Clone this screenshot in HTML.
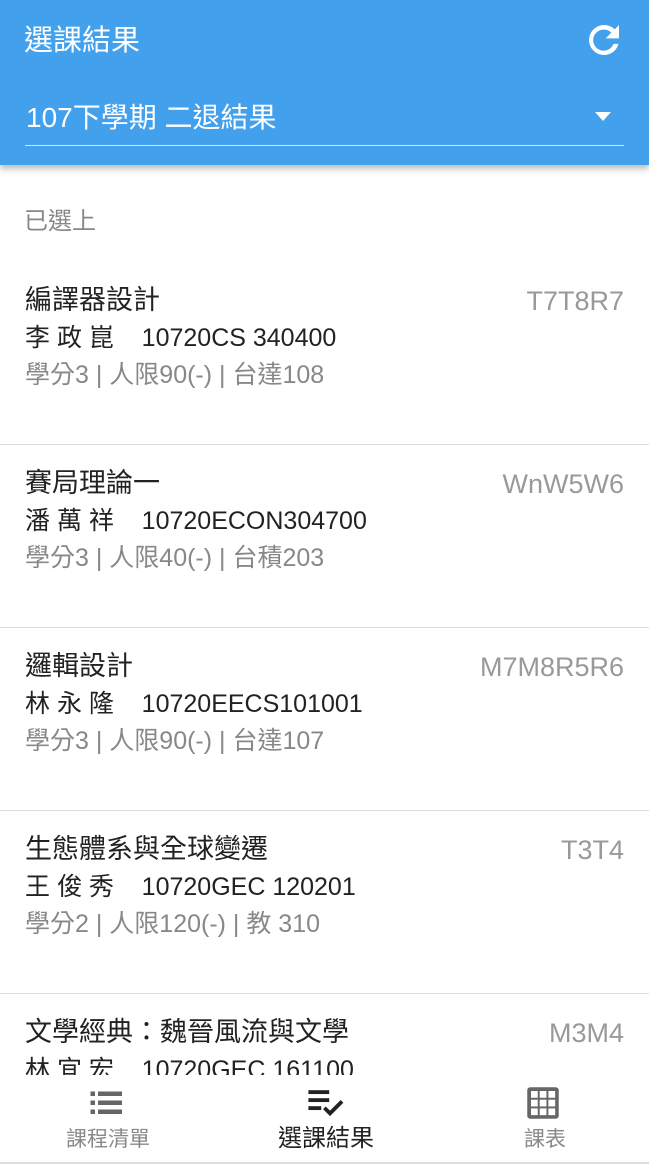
<!DOCTYPE html>
<html><head><meta charset="utf-8"><style>
*{margin:0;padding:0;box-sizing:border-box}
html,body{width:649px;height:1164px;overflow:hidden}
body{background:#fff;font-family:"Liberation Sans","Noto Sans CJK TC",sans-serif;position:relative;line-height:1}
.hdr{position:absolute;left:0;top:0;width:649px;height:165px;background:#42a0ec;box-shadow:0 4px 6px rgba(0,0,0,.25);z-index:2}
.ttl{position:absolute;left:24px;top:27px;font-size:29px;color:#fff}
.sel{position:absolute;left:26px;top:104px;font-size:28px;color:#fff}
.line{position:absolute;left:25px;right:25px;top:145px;height:1px;background:#cfe6fb}
.tri{position:absolute;left:595px;top:112px;width:0;height:0;border-left:8px solid transparent;border-right:8px solid transparent;border-top:9px solid #fff}
.sec{position:absolute;left:24px;top:210px;font-size:24px;color:#888}
.item{position:absolute;left:0;width:649px;height:183px;border-bottom:1px solid #ddd}
.item .a{position:absolute;left:25px;top:25px;font-size:27px;color:#222}
.item .t{position:absolute;right:25px;top:26px;font-size:27px;color:#999}
.item .b{position:absolute;left:25px;top:64px;font-size:25px;color:#222;white-space:pre}
.item .c{position:absolute;left:25px;top:101px;font-size:25px;color:#888}
.nav{position:absolute;left:0;top:1075px;width:649px;height:89px;background:#fff;border-bottom:2px solid #ddd;z-index:3}
.nv{position:absolute;top:0;width:216px;text-align:center}
.nv span{position:absolute;top:54px;left:0;width:216px;font-size:21px;color:#888}
.nv svg{position:absolute;top:12px}
</style></head><body>
<div class="hdr">
<div class="ttl">選課結果</div>
<svg style="position:absolute;left:584px;top:20px" width="40" height="40" viewBox="0 0 24 24"><path fill="#fff" d="M18.4 5.6A9 9 0 0 0 12 3a9 9 0 1 0 8.7 11.3h-3A6.3 6.3 0 1 1 12 5.8c1.8 0 3.3.7 4.4 1.8L13 11h8V3z"/></svg>
<div class="sel">107下學期 二退結果</div>
<div class="tri"></div>
<div class="line"></div>
</div>
<div class="sec">已選上</div>
<div class="item" style="top:262px"><div class="a">編譯器設計</div><div class="t">T7T8R7</div><div class="b">李 政 崑    10720CS 340400</div><div class="c">學分3 | 人限90(-) | 台達108</div></div>
<div class="item" style="top:445px"><div class="a">賽局理論一</div><div class="t">WnW5W6</div><div class="b">潘 萬 祥    10720ECON304700</div><div class="c">學分3 | 人限40(-) | 台積203</div></div>
<div class="item" style="top:628px"><div class="a">邏輯設計</div><div class="t">M7M8R5R6</div><div class="b">林 永 隆    10720EECS101001</div><div class="c">學分3 | 人限90(-) | 台達107</div></div>
<div class="item" style="top:811px"><div class="a">生態體系與全球變遷</div><div class="t">T3T4</div><div class="b">王 俊 秀    10720GEC 120201</div><div class="c">學分2 | 人限120(-) | 教 310</div></div>
<div class="item" style="top:994px"><div class="a">文學經典：魏晉風流與文學</div><div class="t">M3M4</div><div class="b">林 宜 宏    10720GEC 161100</div><div class="c"></div></div>
<div class="nav">
<div class="nv" style="left:0"><svg style="left:89px" width="36" height="30" viewBox="0 0 24 20"><g fill="#666"><rect x="1" y="3" width="3" height="3"/><rect x="6" y="3" width="16" height="3"/><rect x="1" y="9" width="3" height="3"/><rect x="6" y="9" width="16" height="3"/><rect x="1" y="15" width="3" height="3"/><rect x="6" y="15" width="16" height="3"/></g></svg><span>課程清單</span></div>
<div class="nv" style="left:218px"><svg style="left:88px" width="40" height="32" viewBox="0 0 24 20"><g fill="#222"><rect x="1" y="2" width="13" height="2.4"/><rect x="1" y="7" width="13" height="2.4"/><rect x="1" y="12" width="8" height="2.4"/></g><path d="M11 13l3.5 3.5L22 9" stroke="#222" stroke-width="2.4" fill="none"/></svg><span style="color:#222;font-size:24px;top:52px">選課結果</span></div>
<div class="nv" style="left:437px"><svg style="left:88px;top:10px" width="36" height="36" viewBox="0 0 24 24"><rect x="1.5" y="1.5" width="21" height="21" rx="2" fill="#666"/><g fill="#fff"><rect x="4" y="4" width="4.5" height="4.5"/><rect x="9.8" y="4" width="4.5" height="4.5"/><rect x="15.6" y="4" width="4.5" height="4.5"/><rect x="4" y="9.8" width="4.5" height="4.5"/><rect x="9.8" y="9.8" width="4.5" height="4.5"/><rect x="15.6" y="9.8" width="4.5" height="4.5"/><rect x="4" y="15.6" width="4.5" height="4.5"/><rect x="9.8" y="15.6" width="4.5" height="4.5"/><rect x="15.6" y="15.6" width="4.5" height="4.5"/></g></svg><span>課表</span></div>
</div>
</body></html>
